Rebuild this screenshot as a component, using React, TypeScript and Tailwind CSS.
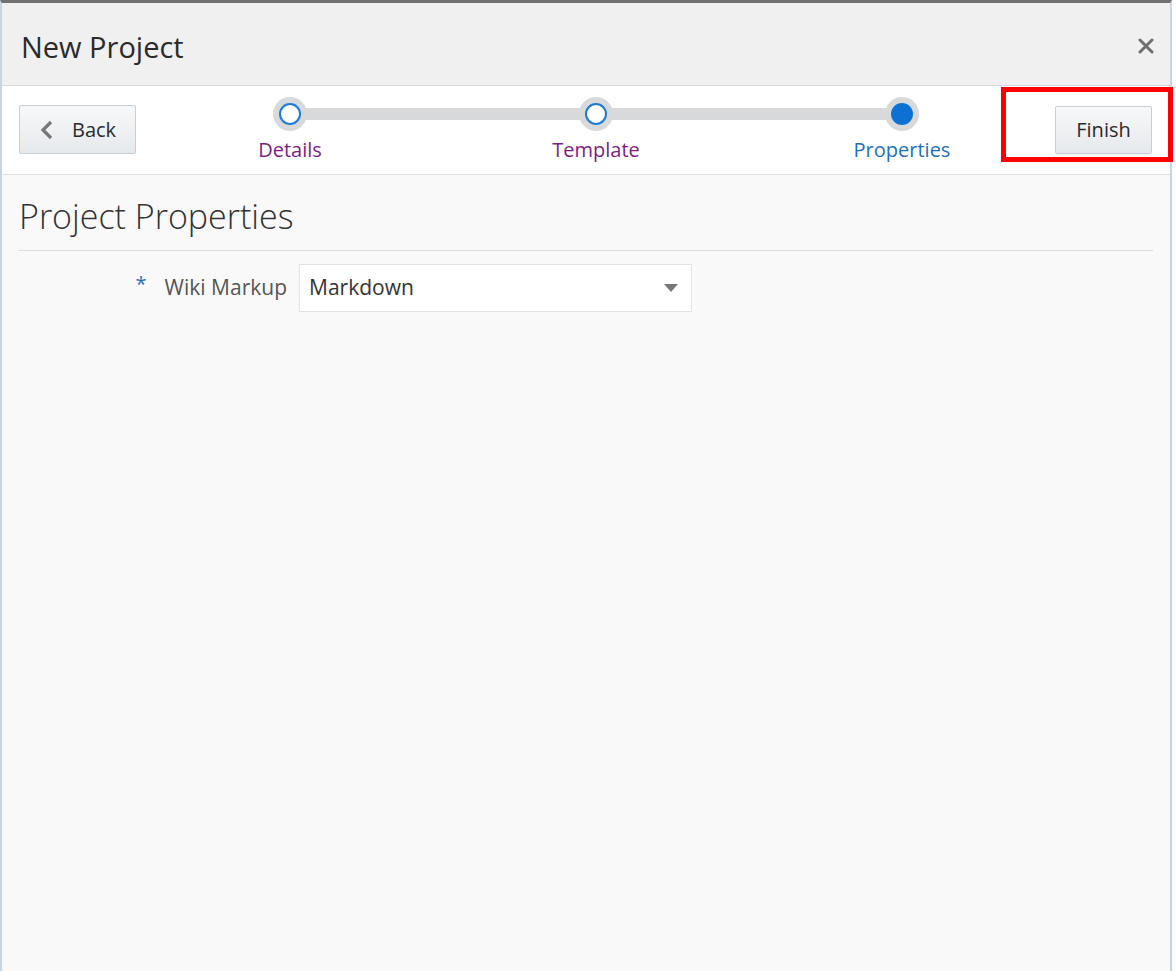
import { useState } from "react";

const steps = [
  { label: "Details", state: "visited" },
  { label: "Template", state: "visited" },
  { label: "Properties", state: "current" },
];

function TrainStop({ label, state }: { label: string; state: string }) {
  const current = state === "current";
  return (
    <div className="flex w-[100px] flex-col items-center">
      <div className="flex h-[34px] w-[34px] items-center justify-center rounded-full bg-[#d8d9db]">
        {current ? (
          <div className="h-[22px] w-[22px] rounded-full bg-[#0b72d4]" />
        ) : (
          <div className="h-[22px] w-[22px] rounded-full border-2 border-[#1d7ad8] bg-white" />
        )}
      </div>
      <span
        className={`mt-[5px] whitespace-nowrap text-[20px] leading-[28px] ${
          current ? "text-[#1f6fb8]" : "text-[#7d1d86]"
        }`}
      >
        {label}
      </span>
    </div>
  );
}

export default function App() {
  const [markup] = useState("Markdown");

  return (
    <div className="min-h-[971px] bg-white font-['Open_Sans',sans-serif]">
      <div className="flex h-[971px] w-[1172px] flex-col border-x-2 border-t-[3px] border-x-[#cbd3dc] border-t-[#707070] bg-[#f9f9f9]">
        {/* header */}
        <div className="flex h-[83px] shrink-0 items-center justify-between border-b border-[#d3d9df] bg-[#f0f0f0] pl-[19px] pr-[16px]">
          <h1 className="mt-[4px] text-[29px] leading-none text-[#2b2b2b]">New Project</h1>
          <button className="mt-[3px] text-[#6f6f6f]" aria-label="Close">
            <svg width="16" height="16" viewBox="0 0 16 16">
              <path d="M2 2L14 14M14 2L2 14" stroke="currentColor" strokeWidth="3" strokeLinecap="round" />
            </svg>
          </button>
        </div>

        {/* train toolbar */}
        <div className="relative flex h-[89px] shrink-0 items-start border-b border-[#dde2e6] bg-white">
          <button className="ml-[17px] mt-[19px] flex h-[49px] w-[117px] items-center rounded-[2px] border border-[#c6cfd7] bg-gradient-to-b from-[#f7f8f9] to-[#e6e9ec] pl-[20px] text-[20px] text-[#2b2b2b]">
            <svg width="14" height="20" viewBox="0 0 14 20" className="mr-[18px] text-[#777]">
              <path d="M11 2L3 10L11 18" fill="none" stroke="currentColor" strokeWidth="3.2" />
            </svg>
            Back
          </button>

          <div className="relative ml-[104px] mt-[11px] flex w-[712px] justify-between">
            <div className="absolute left-[50px] right-[50px] top-[11px] h-[12px] bg-[#d8d9db]" />
            {steps.map((s) => (
              <div key={s.label} className="relative">
                <TrainStop label={s.label} state={s.state} />
              </div>
            ))}
          </div>

          <button className="ml-[103px] mt-[20px] h-[48px] w-[97px] rounded-[2px] border border-[#c6cfd7] bg-gradient-to-b from-[#f7f8f9] to-[#e6e9ec] text-[20px] text-[#2b2b2b]">
            Finish
          </button>

          {/* highlight annotation */}
          <div className="pointer-events-none absolute left-[999px] top-[1px] h-[75px] w-[172px] border-[5px] border-[#ff0000]" />
        </div>

        {/* content */}
        <div className="flex-1 px-[17px]">
          <h2 className="pt-[19px] pb-[12px] text-[34px] font-light leading-[44px] text-[#333]">
            Project Properties
          </h2>
          <div className="border-t border-[#d8dee3] pr-[1px]" />

          <div className="mt-[13px] flex items-center">
            <div className="flex w-[280px] items-center justify-end pr-[12px]">
              <span className="mr-[18px] mt-[-8px] text-[20px] text-[#1f72c2]">*</span>
              <span className="text-[21px] text-[#555]">Wiki Markup</span>
            </div>
            <div className="flex h-[48px] w-[393px] items-center justify-between border border-[#dfe4e8] bg-white pl-[9px] pr-[13px]">
              <span className="text-[21px] text-[#333]">{markup}</span>
              <svg width="14" height="10" viewBox="0 0 14 10" className="text-[#777]">
                <path d="M0 1H14L7 9Z" fill="currentColor" />
              </svg>
            </div>
          </div>
        </div>
      </div>
    </div>
  );
}
